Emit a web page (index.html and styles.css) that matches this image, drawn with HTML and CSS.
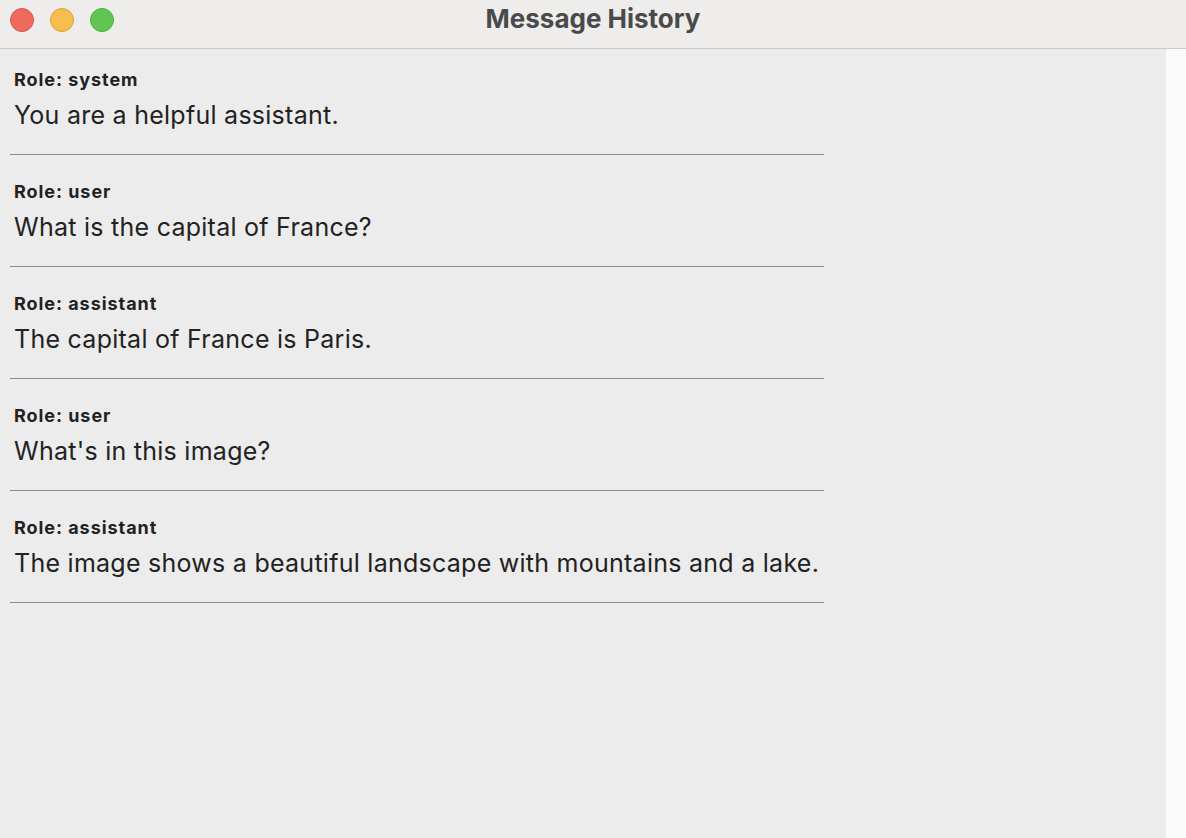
FILE: index.html
```html
<!DOCTYPE html>
<html>
<head>
<meta charset="utf-8">
<title>Message History</title>
<link rel="stylesheet" href="styles.css">
</head>
<body>
<div class="window">
  <header class="titlebar">
    <div class="lights">
      <span class="light red"></span>
      <span class="light yellow"></span>
      <span class="light green"></span>
    </div>
    <h1 class="title">Message History</h1>
  </header>
  <div class="body">
    <main class="content">
      <div class="list">
        <section class="message">
          <div class="role">Role: system</div>
          <div class="text">You are a helpful assistant.</div>
        </section>
        <section class="message">
          <div class="role">Role: user</div>
          <div class="text">What is the capital of France?</div>
        </section>
        <section class="message">
          <div class="role">Role: assistant</div>
          <div class="text">The capital of France is Paris.</div>
        </section>
        <section class="message">
          <div class="role">Role: user</div>
          <div class="text">What's in this image?</div>
        </section>
        <section class="message">
          <div class="role">Role: assistant</div>
          <div class="text">The image shows a beautiful landscape with mountains and a lake.</div>
        </section>
      </div>
    </main>
    <aside class="gutter"></aside>
  </div>
</div>
</body>
</html>
```
FILE: styles.css
```css
* { box-sizing: border-box; }
html, body { margin: 0; padding: 0; }
body {
  width: 1186px;
  height: 838px;
  overflow: hidden;
  font-family: Inter, "Liberation Sans", sans-serif;
  background: #ececec;
}
.window {
  display: flex;
  flex-direction: column;
  height: 838px;
}
.titlebar {
  position: relative;
  height: 49px;
  flex: none;
  background: #eeedeb;
  border-bottom: 1px solid #c9c9c9;
  display: flex;
  align-items: center;
  justify-content: center;
}
.lights {
  position: absolute;
  left: 10px;
  top: 8px;
  display: flex;
  gap: 16px;
}
.light {
  width: 24px;
  height: 24px;
  border-radius: 50%;
  display: block;
}
.red { background: #ee6a5f; border: 1px solid #d9534a; }
.yellow { background: #f6be4f; border: 1px solid #dea23a; }
.green { background: #61c554; border: 1px solid #4fae43; }
.title {
  margin: 0;
  margin-top: -10px;
  font-size: 26px;
  line-height: 30px;
  font-weight: 700;
  color: #4a4a4a;
  letter-spacing: 0;
}
.body {
  flex: 1;
  display: flex;
}
.content {
  flex: 1;
  background: #ececec;
  padding-left: 10px;
}
.gutter {
  width: 20px;
  flex: none;
  background: #fafafa;
}
.list {
  width: 814px;
}
.message {
  padding: 27px 0 24px 4px;
  border-bottom: 1px solid #8c8c8c;
}
.message:first-child { padding-top: 21px; }
.role {
  font-size: 18px;
  line-height: 20px;
  font-weight: 700;
  letter-spacing: 0.95px;
  color: #222222;
}
.text {
  margin-top: 10px;
  font-size: 25px;
  line-height: 30px;
  letter-spacing: 0.26px;
  color: #222222;
}
```
